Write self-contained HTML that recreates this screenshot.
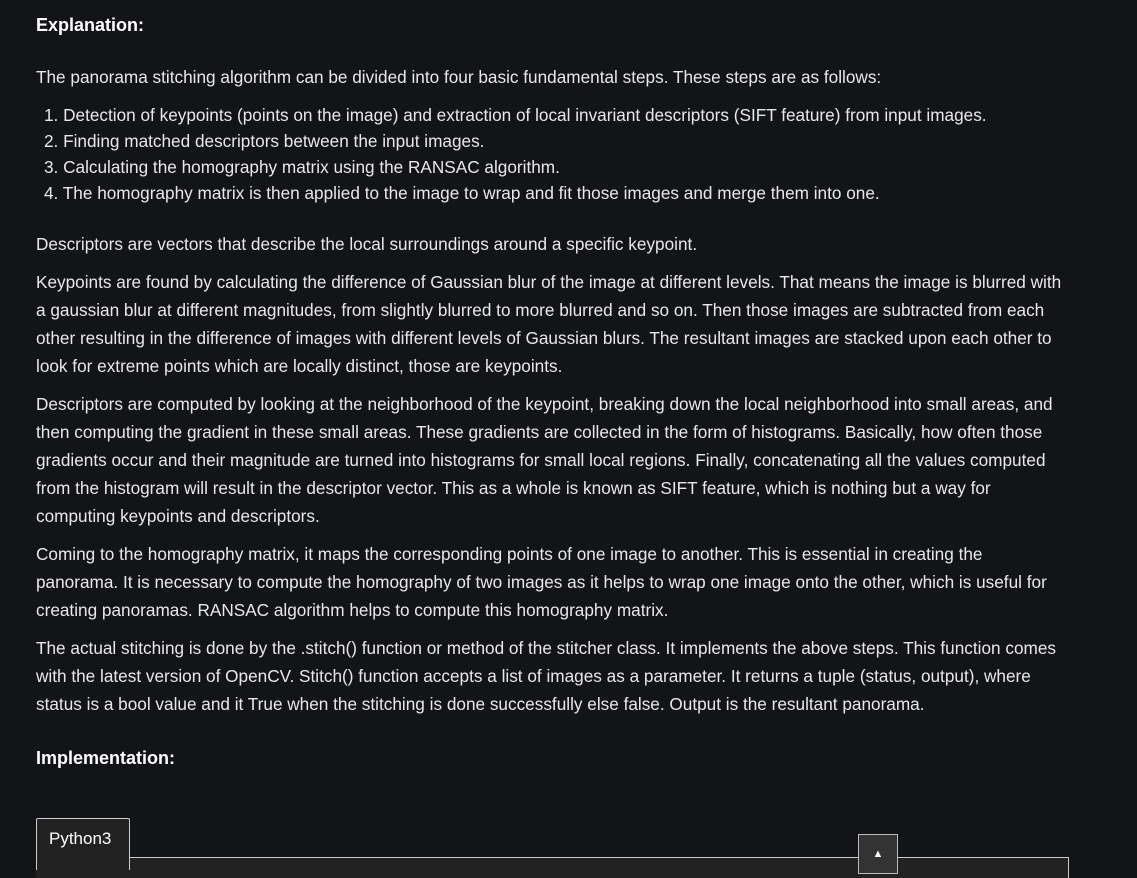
<!DOCTYPE html>
<html><head><meta charset="utf-8"><style>
body{margin:0;background:#131417;color:#e8e8e8;font-family:"Liberation Sans",sans-serif;width:1137px;height:870px;overflow:hidden;position:relative}
.l{position:absolute;left:36px;white-space:nowrap;font-size:17.2px;line-height:20px;margin-top:-1px}
h2{position:absolute;left:36px;margin:0;font-size:18px;font-weight:bold;color:#fff;line-height:24px;margin-top:-1px}
.tab{position:absolute;left:36px;top:818px;width:94px;height:52px;background:#222;border:1px solid #ccc;border-bottom:none;border-radius:2px 2px 0 0;box-sizing:border-box;font-size:17px;color:#fff;padding:10px 0 0 12px;z-index:2}
.box{position:absolute;left:36px;top:857px;width:1032px;height:20px;border-top:1px solid #ccc;border-right:1px solid #ccc;background:#222}
.up{position:absolute;left:858px;top:834px;width:40px;height:40px;background:#333;border:1px solid #bbb;box-sizing:border-box;color:#fff;font-size:11px;text-align:center;padding-top:13px;z-index:3}
</style></head><body>
<h2 style="top:14px">Explanation:</h2>
<div class="l" style="top:68px">The panorama stitching algorithm can be divided into four basic fundamental steps. These steps are as follows:</div>
<div class="l" style="top:106px;left:44px">1. Detection of keypoints (points on the image) and extraction of local invariant descriptors (SIFT feature) from input images.</div>
<div class="l" style="top:132px;left:44px">2. Finding matched descriptors between the input images.</div>
<div class="l" style="top:158px;left:44px">3. Calculating the homography matrix using the RANSAC algorithm.</div>
<div class="l" style="top:184px;left:44px">4. The homography matrix is then applied to the image to wrap and fit those images and merge them into one.</div>
<div class="l" style="top:235px">Descriptors are vectors that describe the local surroundings around a specific keypoint.</div>
<div class="l" style="top:273px">Keypoints are found by calculating the difference of Gaussian blur of the image at different levels. That means the image is blurred with</div>
<div class="l" style="top:301px">a gaussian blur at different magnitudes, from slightly blurred to more blurred and so on. Then those images are subtracted from each</div>
<div class="l" style="top:329px">other resulting in the difference of images with different levels of Gaussian blurs. The resultant images are stacked upon each other to</div>
<div class="l" style="top:357px">look for extreme points which are locally distinct, those are keypoints.</div>
<div class="l" style="top:395px">Descriptors are computed by looking at the neighborhood of the keypoint, breaking down the local neighborhood into small areas, and</div>
<div class="l" style="top:423px">then computing the gradient in these small areas. These gradients are collected in the form of histograms. Basically, how often those</div>
<div class="l" style="top:451px">gradients occur and their magnitude are turned into histograms for small local regions. Finally, concatenating all the values computed</div>
<div class="l" style="top:479px">from the histogram will result in the descriptor vector. This as a whole is known as SIFT feature, which is nothing but a way for</div>
<div class="l" style="top:507px">computing keypoints and descriptors.</div>
<div class="l" style="top:545px">Coming to the homography matrix, it maps the corresponding points of one image to another. This is essential in creating the</div>
<div class="l" style="top:573px">panorama. It is necessary to compute the homography of two images as it helps to wrap one image onto the other, which is useful for</div>
<div class="l" style="top:601px">creating panoramas. RANSAC algorithm helps to compute this homography matrix.</div>
<div class="l" style="top:639px">The actual stitching is done by the .stitch() function or method of the stitcher class. It implements the above steps. This function comes</div>
<div class="l" style="top:667px">with the latest version of OpenCV. Stitch() function accepts a list of images as a parameter. It returns a tuple (status, output), where</div>
<div class="l" style="top:695px">status is a bool value and it True when the stitching is done successfully else false. Output is the resultant panorama.</div>
<h2 style="top:747px">Implementation:</h2>
<div class="box"></div>
<div class="tab">Python3</div>
<div class="up">▲</div>
</body></html>
